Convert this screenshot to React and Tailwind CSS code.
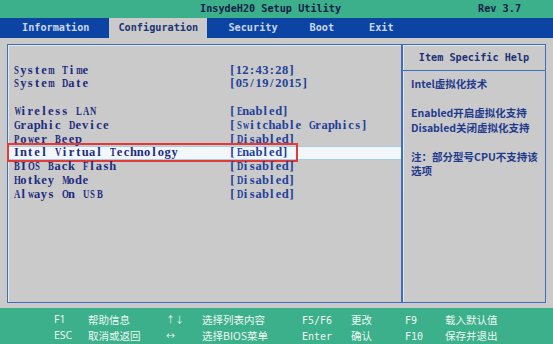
function cellScale(c) {
  if (c === "W") return "scale-x-[0.55]";
  if (c === "M" || c === "m") return "scale-x-[0.62]";
  if (c === "w") return "scale-x-[0.68]";
  if (/[A-Z]/.test(c) && c !== "I" && c !== "J") return "scale-x-[0.7]";
  return "";
}

function Cells({ text, cell }) {
  return (
    <span className="inline-flex whitespace-nowrap">
      {text.split("").map((c, i) => (
        <span key={i} className={"inline-block text-center " + cell + " " + cellScale(c)}>
          {c === " " ? "\u00a0" : c}
        </span>
      ))}
    </span>
  );
}

export default function App() {
  const rows = [
    ["System Time", "[12:43:28]", true],
    ["System Date", "[05/19/2015]", true],
    null,
    ["Wireless LAN", "[Enabled]"],
    ["Graphic Device", "[Switchable Graphics]"],
    ["Power Beep", "[Disabled]"],
    ["Intel Virtual Technology", "[Enabled]", false, true],
    ["BIOS Back Flash", "[Disabled]"],
    ["Hotkey Mode", "[Disabled]"],
    ["Always On USB", "[Disabled]"],
  ];
  const mono = { fontFamily: '"DejaVu Sans Mono", monospace' };
  return (
    <div className="w-[553px] h-[344px] flex flex-col overflow-hidden bg-[#cacaca]">
      {/* title */}
      <div className="h-[18px] bg-[#3caf8b] flex items-center text-[10.2px] font-bold text-[#14224a] font-['DejaVu_Sans_Mono',monospace]">
        <span className="ml-[200px]">InsydeH20 Setup Utility</span>
        <span className="ml-[137px]">Rev 3.7</span>
      </div>
      {/* tabs */}
      <div className="h-[20px] bg-[#0c44a4] flex items-stretch text-[10.2px] font-bold text-[#c9d6ee] font-['DejaVu_Sans_Mono',monospace]">
        <span className="ml-[22px] flex items-center">Information</span>
        <span className="ml-[20px] w-[98px] pl-[9px] bg-[#cacaca] text-[#1d3575] flex items-center">Configuration</span>
        <span className="ml-[21px] flex items-center">Security</span>
        <span className="ml-[32px] flex items-center">Boot</span>
        <span className="ml-[35px] flex items-center">Exit</span>
      </div>
      {/* content */}
      <div className="flex-1 px-[7px] pt-[6px] pb-[5px] flex">
        <div className="flex-1 flex border border-[#3c6fc2] shadow-[inset_1px_1px_0_#e6e6e6]">
          {/* left */}
          <div className="w-[393px] pt-[18px] font-['Liberation_Serif',serif]">
            {rows.map((r, i) =>
              r === null ? (
                <div key={i} className="h-[13.8px]" />
              ) : (
                <div
                  key={i}
                  className={
                    "relative flex items-center h-[13.8px] pl-[5px] " +
                    (r[3] ? "bg-[#f2f7fb] shadow-[inset_0_1px_0_#a9cbe6,inset_0_-1px_0_#a9cbe6]" : "")
                  }
                >
                  <span className="w-[216px] text-[12.5px] font-bold text-[#1e2c80]">
                    <Cells text={r[0]} cell="w-[6.88px]" />
                  </span>
                  <span className={"text-[12.5px] text-[#23409a] " + (r[2] ? "font-bold" : "font-semibold")}>
                    <Cells text={r[1]} cell="w-[6.6px]" />
                  </span>
                  {r[3] && (
                    <div className="absolute left-[-1px] top-[-3px] w-[291px] h-[19px] border-2 border-[#e23a36]" />
                  )}
                </div>
              )
            )}
          </div>
          {/* help */}
          <div className="flex-1 flex flex-col border-l-2 border-[#3c6fc2] shadow-[inset_1px_0_0_#e6e6e6]">
            <div className="h-[26px] flex items-center justify-center border-b border-[#3c6fc2] text-[10.2px] font-bold text-[#1d3278] font-['DejaVu_Sans_Mono',monospace]">
              Item Specific Help
            </div>
            <div className="pl-[8px] pt-[6px] text-[10.5px] leading-[14.5px] font-bold text-[#1f3a8e] font-['Noto_Sans_CJK_SC','Noto_Sans',sans-serif]">
              <div>Intel虚拟化技术</div>
              <div className="h-[14.5px]" />
              <div>Enabled开启虚拟化支持</div>
              <div>Disabled关闭虚拟化支持</div>
              <div className="h-[14.5px]" />
              <div>注：部分型号CPU不支持该</div>
              <div>选项</div>
            </div>
          </div>
        </div>
      </div>
      {/* footer */}
      <div className="h-[36px] bg-[#3caf8b] pt-[4px] pl-[54px] grid grid-cols-[34px_78px_36px_100px_49px_54px_40px_auto] auto-rows-[16px] items-center text-[10.5px] text-[#eef8f3] font-['Noto_Sans_CJK_SC','Noto_Sans',sans-serif]">
        <span className="font-['Noto_Sans',sans-serif]">F1</span>
        <span>帮助信息</span>
        <span className="text-[9px]">↑↓</span>
        <span>选择列表内容</span>
        <span className="text-[10px]" style={mono}>F5/F6</span>
        <span>更改</span>
        <span className="text-[10px]" style={mono}>F9</span>
        <span>载入默认值</span>
        <span className="font-['Noto_Sans',sans-serif]">ESC</span>
        <span>取消或返回</span>
        <span className="text-[9px]">↔</span>
        <span>选择BIOS菜单</span>
        <span className="text-[10px]" style={mono}>Enter</span>
        <span>确认</span>
        <span className="text-[10px]" style={mono}>F10</span>
        <span>保存并退出</span>
      </div>
    </div>
  );
}
